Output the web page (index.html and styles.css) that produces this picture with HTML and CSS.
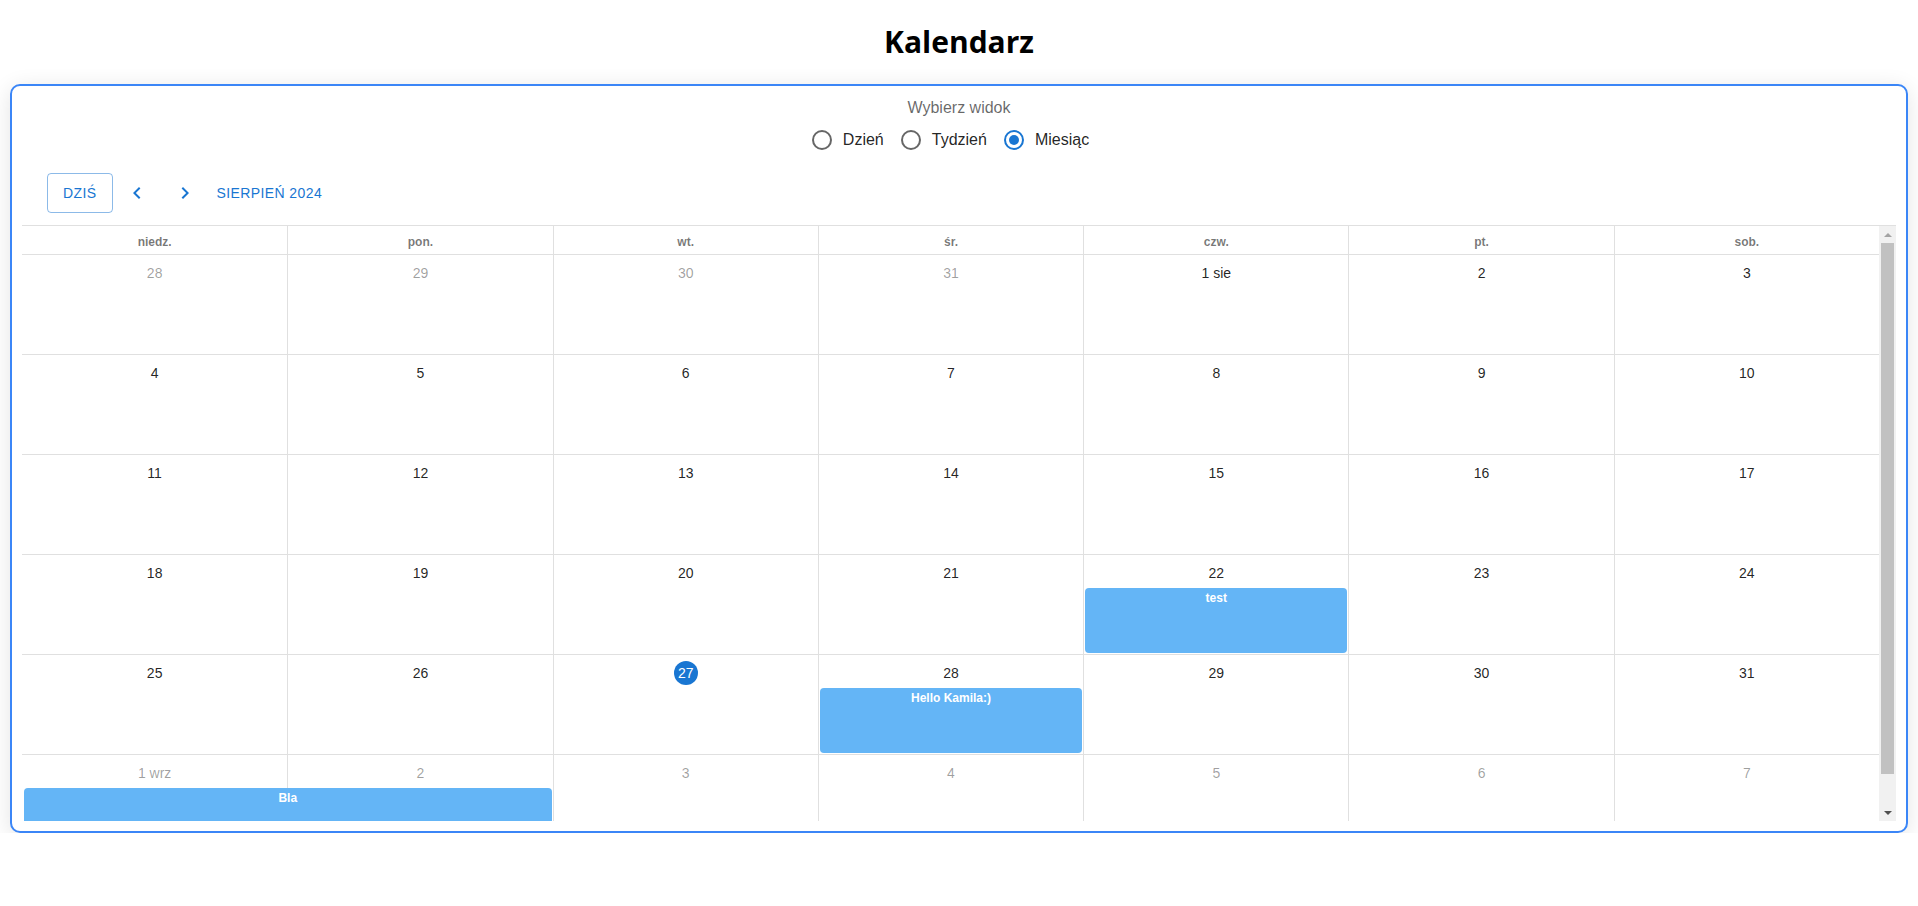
FILE: index.html
```html
<!DOCTYPE html>
<html lang="pl">
<head>
<meta charset="utf-8">
<title>Kalendarz</title>
<link rel="stylesheet" href="styles.css">
</head>
<body>
<h1 class="page-title">Kalendarz</h1>
<div class="card">
  <div class="view-picker">
    <div class="view-label">Wybierz widok</div>
    <div class="radio-row">
      <label class="radio-opt">
        <span class="radio-icon"><svg viewBox="0 0 24 24" width="24" height="24"><circle cx="12" cy="12" r="9" class="ring"/></svg></span>
        <span>Dzień</span>
      </label>
      <label class="radio-opt">
        <span class="radio-icon"><svg viewBox="0 0 24 24" width="24" height="24"><circle cx="12" cy="12" r="9" class="ring"/></svg></span>
        <span>Tydzień</span>
      </label>
      <label class="radio-opt">
        <span class="radio-icon checked"><svg viewBox="0 0 24 24" width="24" height="24"><circle cx="12" cy="12" r="9" class="ring"/><circle cx="12" cy="12" r="5" class="dot"/></svg></span>
        <span>Miesiąc</span>
      </label>
    </div>
  </div>

  <div class="toolbar">
    <button class="today-btn">Dziś</button>
    <span class="nav-btn"><svg viewBox="0 0 24 24" width="24" height="24"><path d="M15.41 7.41 14 6l-6 6 6 6 1.41-1.41L10.83 12z"/></svg></span>
    <span class="nav-btn"><svg viewBox="0 0 24 24" width="24" height="24"><path d="M10 6 8.59 7.41 13.17 12l-4.58 4.59L10 18l6-6z"/></svg></span>
    <span class="month-label">Sierpień 2024</span>
  </div>

  <div class="sched">
    <div class="grid-wrap">
      <div class="head-row">
        <div class="head-cell">niedz.</div>
        <div class="head-cell">pon.</div>
        <div class="head-cell">wt.</div>
        <div class="head-cell">śr.</div>
        <div class="head-cell">czw.</div>
        <div class="head-cell">pt.</div>
        <div class="head-cell">sob.</div>
      </div>

      <div class="week">
        <div class="day other">28</div>
        <div class="day other">29</div>
        <div class="day other">30</div>
        <div class="day other">31</div>
        <div class="day">1 sie</div>
        <div class="day">2</div>
        <div class="day">3</div>
      </div>

      <div class="week">
        <div class="day">4</div>
        <div class="day">5</div>
        <div class="day">6</div>
        <div class="day">7</div>
        <div class="day">8</div>
        <div class="day">9</div>
        <div class="day">10</div>
      </div>

      <div class="week">
        <div class="day">11</div>
        <div class="day">12</div>
        <div class="day">13</div>
        <div class="day">14</div>
        <div class="day">15</div>
        <div class="day">16</div>
        <div class="day">17</div>
      </div>

      <div class="week">
        <div class="day">18</div>
        <div class="day">19</div>
        <div class="day">20</div>
        <div class="day">21</div>
        <div class="day">22</div>
        <div class="day">23</div>
        <div class="day">24</div>
        <div class="appt" style="--col:4;--span:1">test</div>
      </div>

      <div class="week">
        <div class="day">25</div>
        <div class="day">26</div>
        <div class="day"><span class="today-num">27</span></div>
        <div class="day">28</div>
        <div class="day">29</div>
        <div class="day">30</div>
        <div class="day">31</div>
        <div class="appt" style="--col:3;--span:1">Hello Kamila:)</div>
      </div>

      <div class="week">
        <div class="day other">1 wrz</div>
        <div class="day other">2</div>
        <div class="day other">3</div>
        <div class="day other">4</div>
        <div class="day other">5</div>
        <div class="day other">6</div>
        <div class="day other">7</div>
        <div class="appt" style="--col:0;--span:2">Bla</div>
      </div>
    </div>

    <div class="vscroll">
      <div class="sb-btn"><span class="tri-up"></span></div>
      <div class="sb-track"><div class="sb-thumb"></div></div>
      <div class="sb-btn"><span class="tri-down"></span></div>
    </div>
  </div>
</div>
</body>
</html>
```

FILE: styles.css
```css
* {
  box-sizing: border-box;
}

body {
  margin: 0;
  background: #ffffff;
  font-family: "Liberation Sans", Arial, sans-serif;
  color: rgba(0, 0, 0, 0.87);
}

.page-title {
  font-family: "Open Sans", "Noto Sans", sans-serif;
  font-weight: 700;
  font-size: 30px;
  line-height: 41px;
  text-align: center;
  margin: 21px 0 22px;
  color: #000;
}

.card {
  margin: 0 10px;
  border: 2px solid #3b86f7;
  border-radius: 10px;
  padding: 10px;
  box-shadow: 0 4px 22px rgba(0, 0, 0, 0.11);
  background: #fff;
}

/* view picker */
.view-picker {
  display: flex;
  flex-direction: column;
  align-items: center;
}

.view-label {
  font-size: 16px;
  line-height: 23px;
  color: rgba(0, 0, 0, 0.6);
}

.radio-row {
  display: flex;
  justify-content: center;
}

.radio-opt {
  display: flex;
  align-items: center;
  margin: 0 17px 0 -11px;
  font-size: 16px;
  color: rgba(0, 0, 0, 0.87);
}

.radio-icon {
  display: flex;
  padding: 9px;
}

.radio-icon .ring {
  fill: none;
  stroke: rgba(0, 0, 0, 0.6);
  stroke-width: 2;
}

.radio-icon.checked .ring {
  stroke: #1976d2;
}

.radio-icon .dot {
  fill: #1976d2;
}

/* toolbar */
.toolbar {
  display: flex;
  align-items: center;
  height: 65px;
  padding-left: 25px;
  border-bottom: 1px solid #e0e0e0;
}

.today-btn {
  height: 40px;
  padding: 0 15px;
  border: 1px solid rgba(25, 118, 210, 0.5);
  border-radius: 4px;
  background: transparent;
  color: #1976d2;
  font-family: "Liberation Sans", Arial, sans-serif;
  font-size: 14px;
  font-weight: 500;
  letter-spacing: 0.4px;
  text-transform: uppercase;
  line-height: 38px;
}

.nav-btn {
  width: 48px;
  height: 48px;
  display: flex;
  align-items: center;
  justify-content: center;
}

.nav-btn svg {
  fill: #1976d2;
}

.month-label {
  padding: 6px 8px;
  font-size: 14px;
  font-weight: 500;
  letter-spacing: 0.4px;
  text-transform: uppercase;
  color: #1976d2;
  line-height: 24px;
}

/* scheduler grid */
.sched {
  display: flex;
  height: 595px;
}

.grid-wrap {
  flex: 1;
  overflow: hidden;
}

.head-row,
.week {
  display: grid;
  grid-template-columns: repeat(7, 1fr);
}

.head-cell {
  height: 29px;
  padding-top: 8px;
  border-bottom: 1px solid #e0e0e0;
  text-align: center;
  font-size: 12px;
  line-height: 16px;
  font-weight: 700;
  color: rgba(0, 0, 0, 0.54);
}

.week {
  position: relative;
}

.day {
  height: 100px;
  padding-top: 6px;
  border-bottom: 1px solid #e0e0e0;
  text-align: center;
  font-size: 14px;
  line-height: 24px;
  color: rgba(0, 0, 0, 0.87);
}

.head-cell + .head-cell,
.day + .day {
  border-left: 1px solid #e0e0e0;
}

.day.other {
  color: rgba(0, 0, 0, 0.38);
}

.today-num {
  display: inline-block;
  width: 24px;
  height: 24px;
  border-radius: 50%;
  background: #1976d2;
  color: #fff;
  line-height: 24px;
}

.appt {
  position: absolute;
  top: 33px;
  height: 65px;
  left: calc(var(--col) * 100% / 7 + 2px);
  width: calc(var(--span) * 100% / 7 - 3px);
  background: #64b5f6;
  border-radius: 4px;
  color: #fff;
  font-size: 12px;
  font-weight: 700;
  line-height: 16px;
  padding-top: 2px;
  text-align: center;
}

/* fake scrollbar */
.vscroll {
  width: 17px;
  background: #f1f1f1;
  display: flex;
  flex-direction: column;
}

.sb-btn {
  height: 17px;
  display: flex;
  align-items: center;
  justify-content: center;
}

.tri-up {
  width: 0;
  height: 0;
  border-left: 4px solid transparent;
  border-right: 4px solid transparent;
  border-bottom: 4px solid #a3a3a3;
}

.tri-down {
  width: 0;
  height: 0;
  border-left: 4px solid transparent;
  border-right: 4px solid transparent;
  border-top: 4px solid #505050;
}

.sb-track {
  flex: 1;
  padding: 0 2px;
}

.sb-thumb {
  height: 531px;
  background: #c1c1c1;
}
```
